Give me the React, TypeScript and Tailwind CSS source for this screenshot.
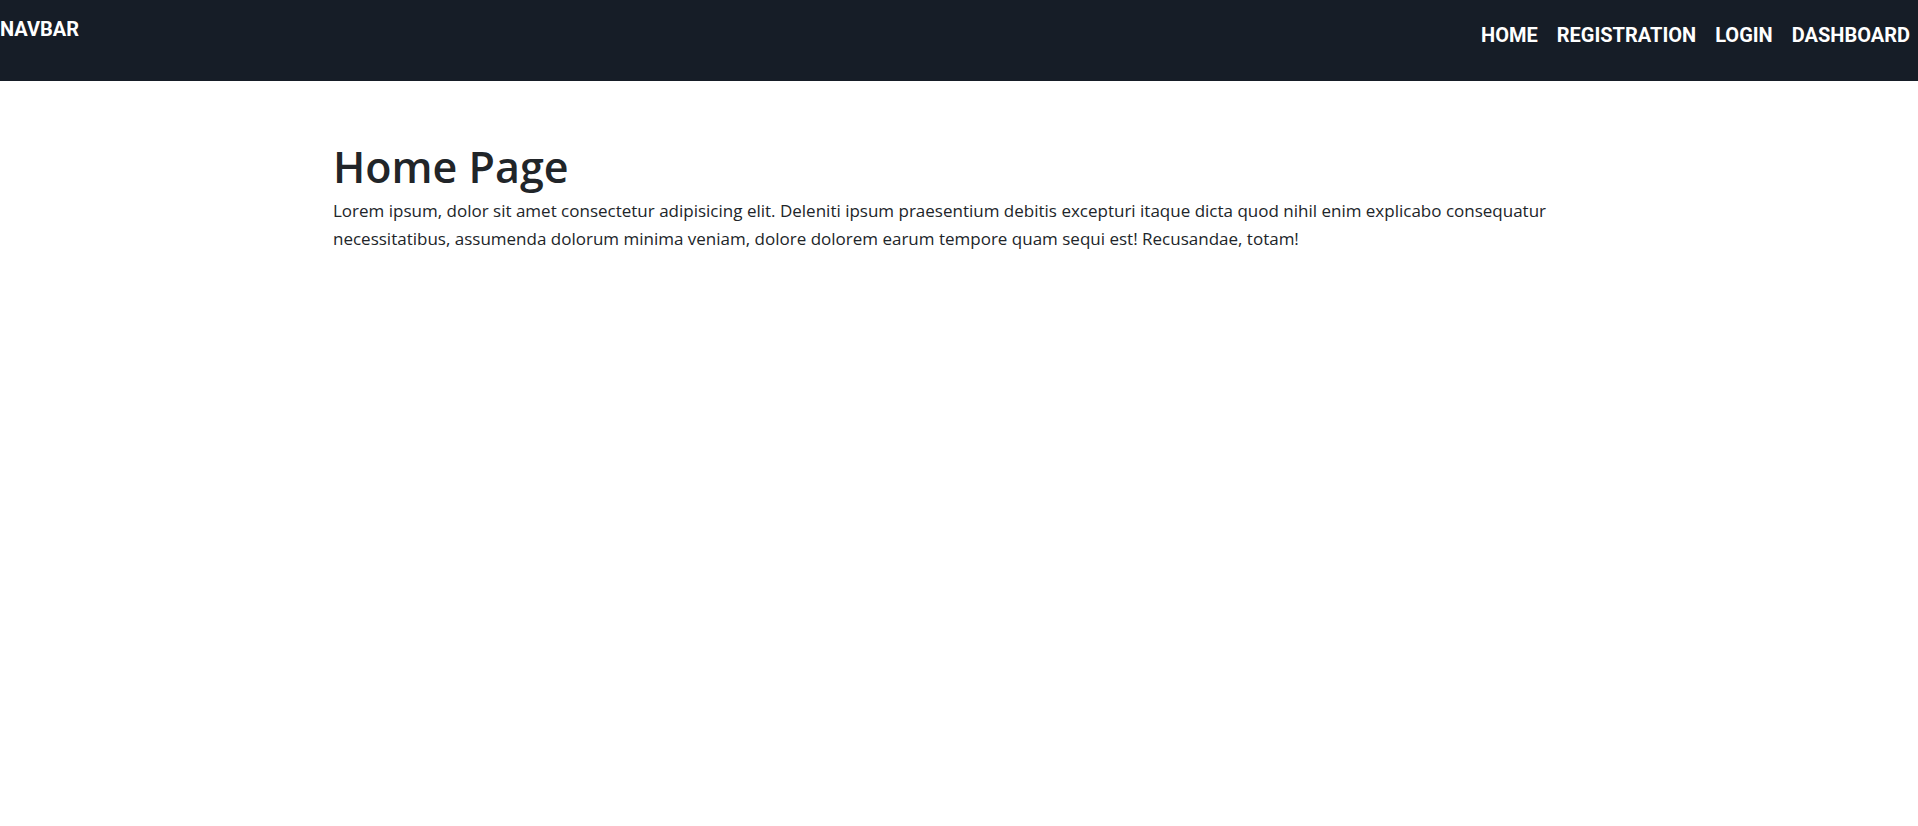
export default function App() {
  const links = ['HOME', 'REGISTRATION', 'LOGIN', 'DASHBOARD'];

  return (
    <div className="min-h-screen bg-white">
      {/* Navbar */}
      <nav className="h-[81px] bg-[#161d27] flex justify-between items-start font-['Roboto',sans-serif] font-bold text-white text-[20px]">
        <div className="pt-[15px] leading-7">NAVBAR</div>
        <ul className="flex gap-[19px] pt-[21px] pr-2 leading-7">
          {links.map((l) => (
            <li key={l}>
              <a href="#" className="text-white">{l}</a>
            </li>
          ))}
        </ul>
      </nav>

      {/* Content */}
      <main className="max-w-[1320px] mx-auto px-[34px] pt-[60px] text-[#212529] font-['Open_Sans',sans-serif]">
        <h1 className="text-[43px] font-semibold leading-[1.2] mb-1">Home Page</h1>
        <p className="text-[17px] leading-[28.5px]">
          Lorem ipsum, dolor sit amet consectetur adipisicing elit. Deleniti ipsum praesentium debitis excepturi itaque dicta quod nihil enim explicabo consequatur necessitatibus, assumenda dolorum minima veniam, dolore dolorem earum tempore quam sequi est! Recusandae, totam!
        </p>
      </main>
    </div>
  );
}
